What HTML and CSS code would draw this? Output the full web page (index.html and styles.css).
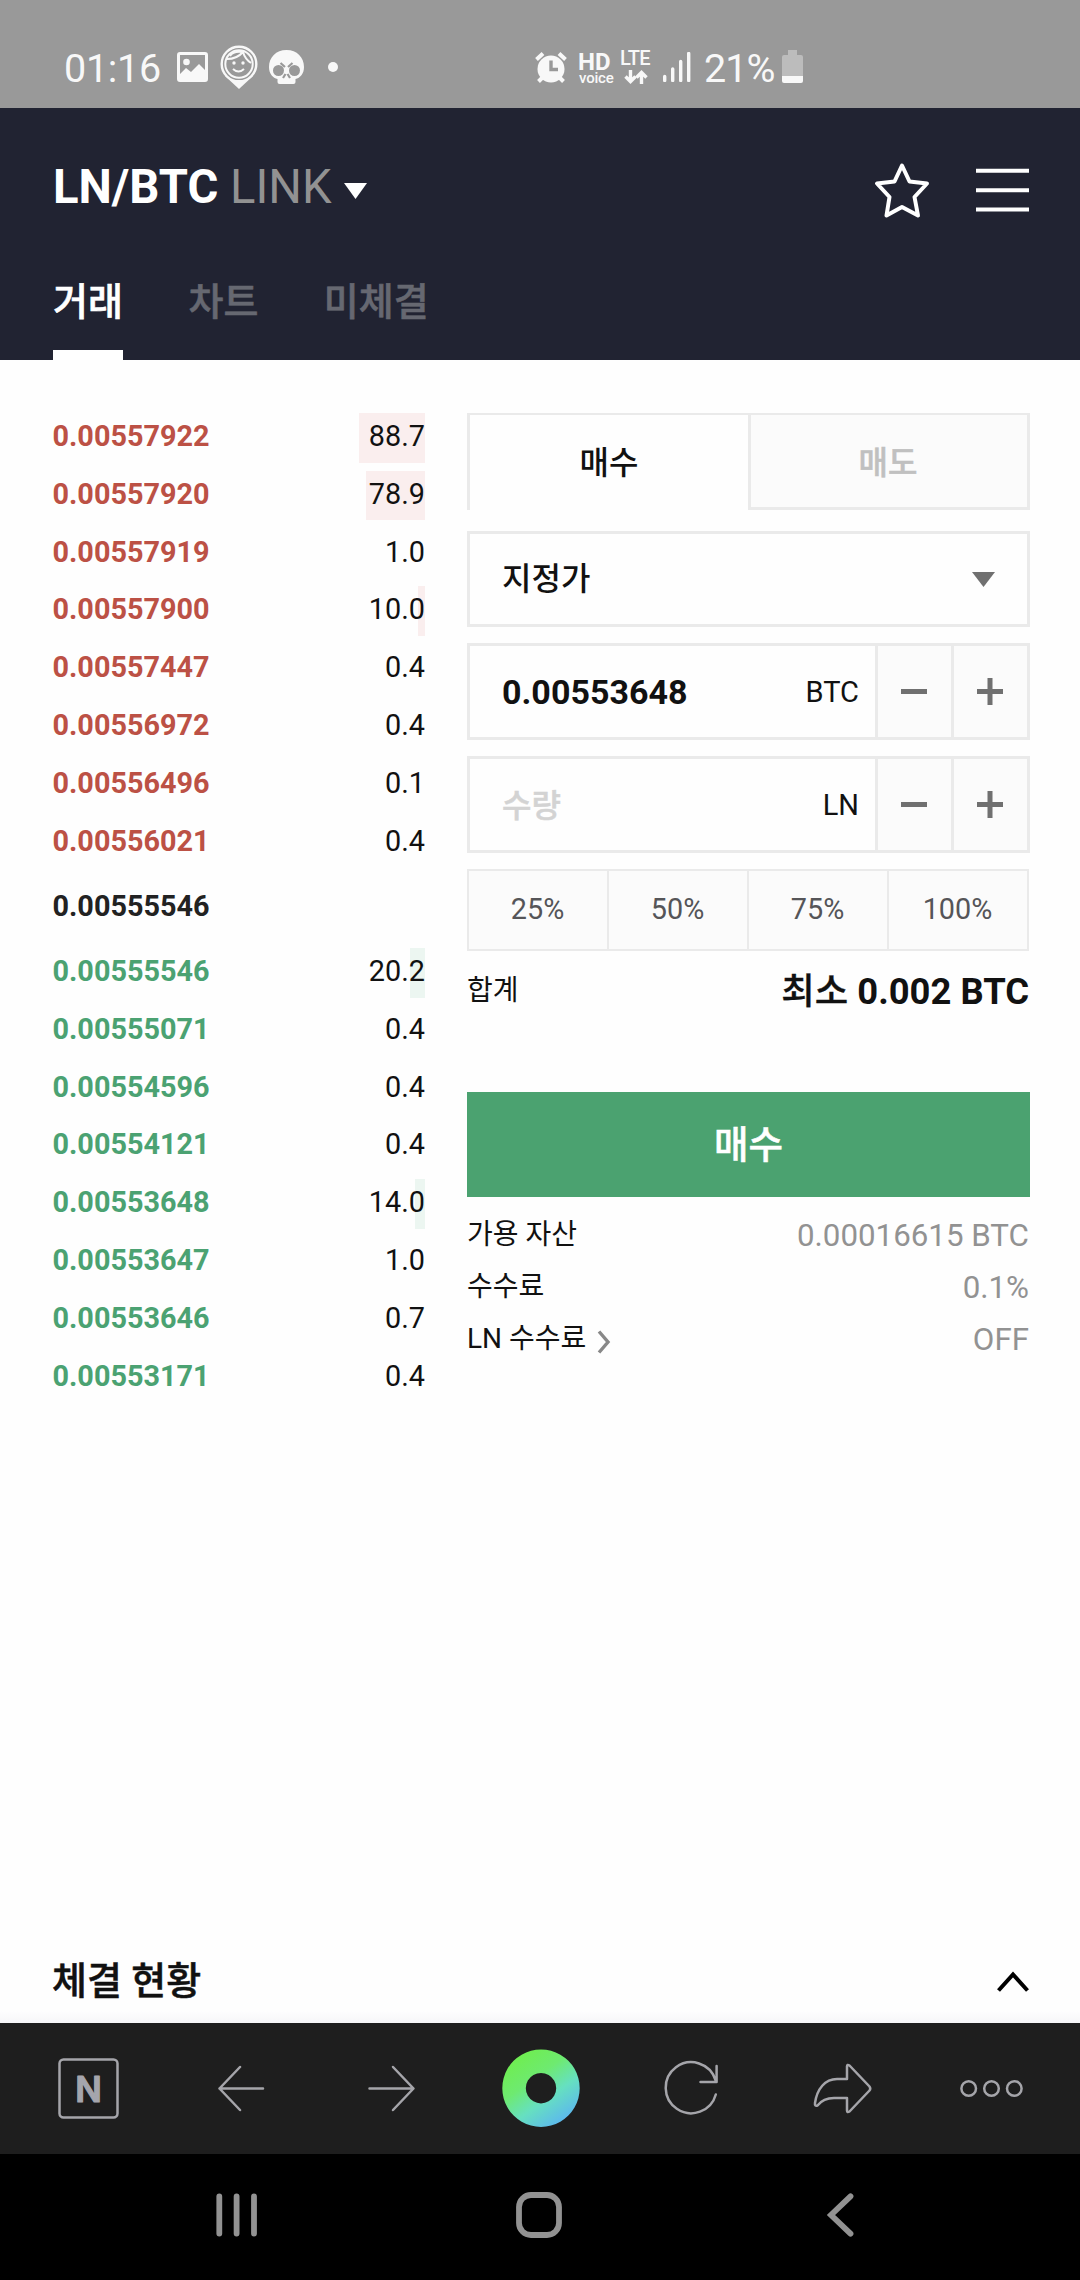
FILE: index.html
```html
<!DOCTYPE html>
<html lang="ko">
<head>
<meta charset="utf-8">
<title>LN/BTC</title>
<link rel="stylesheet" href="styles.css">
</head>
<body>
<div class="status">
  <div class="status-left">
    <span class="clock">01:16</span>
    <svg class="s-image" width="31" height="30" viewBox="0 0 31 30"><path fill="#f8f8f8" fill-rule="evenodd" d="M3 0H28Q31 0 31 3V27Q31 30 28 30H3Q0 30 0 27V3Q0 0 3 0ZM3 3V22L9 16L14 20L22 12L28 18V3Z"/><circle cx="9.5" cy="10" r="3.3" fill="#f8f8f8"/></svg>
    <svg class="s-pin" width="38" height="44" viewBox="0 0 38 44"><path fill="#f8f8f8" d="M5 31L19 44L33 31Z"/><circle cx="19" cy="19" r="17.3" fill="#999" stroke="#f8f8f8" stroke-width="2.4"/><circle cx="19" cy="19" r="13.7" fill="none" stroke="#f8f8f8" stroke-width="2"/><path d="M7 14Q17 14 23 7Q25 14 31 18M22 7Q13 6 10 11" fill="none" stroke="#f8f8f8" stroke-width="2"/><circle cx="14" cy="18" r="1.7" fill="#f8f8f8"/><circle cx="23" cy="18" r="1.7" fill="#f8f8f8"/><path d="M13 24Q18.500 29 24 24" fill="none" stroke="#f8f8f8" stroke-width="2"/></svg>
    <svg class="s-skull" width="35" height="34" viewBox="0 0 35 34"><path fill="#f8f8f8" d="M17.500 0C28 0 35 7.500 35 17C35 24 31 28 26.500 29V32Q26.500 34 24.500 34H10.500Q8.500 34 8.500 32V29C4 28 0 24 0 17C0 7.500 7 0 17.500 0Z"/><circle cx="9.500" cy="20.500" r="5.500" fill="#999"/><circle cx="25.500" cy="20.500" r="5.500" fill="#999"/><path d="M11.500 13L16 17M23.500 13L19 17M14 28L16.500 24M21 28L18.500 24" stroke="#999" stroke-width="2.200"/></svg>
    <svg class="s-dot" width="10" height="10" viewBox="0 0 10 10"><circle cx="5" cy="5" r="5" fill="#f8f8f8"/></svg>
  </div>
  <div class="status-right">
    <svg class="s-alarm" width="32" height="31" viewBox="0 0 32 31"><circle cx="16" cy="17" r="13.500" fill="#f8f8f8"/><path d="M1.500 7.500L8 1.500M30.500 7.500L24 1.500M3.500 29.500L7.500 25.500M28.500 29.500L24.500 25.500" stroke="#f8f8f8" stroke-width="4"/><path d="M16 8.500V17.500H23" fill="none" stroke="#999" stroke-width="3.400"/></svg>
    <div class="hd"><b>HD</b><span>voice</span></div>
    <div class="lte"><b>LTE</b><svg width="24" height="14" viewBox="0 0 24 14"><path d="M6.500 0V11M1.500 6.500L6.500 11.500L11.500 6.500M17.500 14V3M12.500 7.500L17.500 2.500L22.500 7.500" fill="none" stroke="#f8f8f8" stroke-width="3.400"/></svg></div>
    <svg class="s-signal" width="28" height="30" viewBox="0 0 28 30"><path d="M1.700 24.500V28.500M9.700 17V28.500M17.700 9.500V28.500M25.700 1.500V28.500" stroke="#f8f8f8" stroke-width="3.400" stroke-linecap="round"/></svg>
    <span class="battery-text">21%</span>
    <svg class="s-battery" width="21" height="33" viewBox="0 0 21 33"><path fill="#bcbcbc" d="M6 0H15V5H19Q21 5 21 7V26H0V7Q0 5 2 5H6Z"/><path fill="#f8f8f8" d="M0 26H21V31Q21 33 19 33H2Q0 33 0 31Z"/></svg>
  </div>
</div>

<header class="header">
  <div class="title-row">
    <h1 class="pair">LN/BTC <span>LINK</span></h1>
    <svg class="pair-caret" width="23" height="16" viewBox="0 0 23 16"><path fill="#fff" d="M0 0H23L11.500 16Z"/></svg>
    <svg class="star" width="56" height="58" viewBox="0 0 56 58"><path d="M28 4.500L35.500 20.500L53 22.500L40.500 36L44 54.500L28 46L12.500 54.500L15.500 36L3 22.500L20.500 20.500Z" fill="none" stroke="#fff" stroke-width="4" stroke-linejoin="round"/></svg>
    <svg class="menu" width="53" height="44" viewBox="0 0 53 44"><path d="M0 2.700H53M0 22.200H53M0 41.500H53" stroke="#fff" stroke-width="4"/></svg>
  </div>
  <nav class="tabs">
    <span class="tab tab-on">거래</span><span class="tab">차트</span><span class="tab">미체결</span>
  </nav>
</header>

<main class="main">
  <section class="book">
    <div class="row ask"><b>0.00557922</b><span>88.7</span><i style="width:66px"></i></div>
    <div class="row ask"><b>0.00557920</b><span>78.9</span><i style="width:59px"></i></div>
    <div class="row ask"><b>0.00557919</b><span>1.0</span></div>
    <div class="row ask"><b>0.00557900</b><span>10.0</span><i style="width:7px"></i></div>
    <div class="row ask"><b>0.00557447</b><span>0.4</span></div>
    <div class="row ask"><b>0.00556972</b><span>0.4</span></div>
    <div class="row ask"><b>0.00556496</b><span>0.1</span></div>
    <div class="row ask"><b>0.00556021</b><span>0.4</span></div>
    <div class="last"><b>0.00555546</b></div>
    <div class="row bid"><b>0.00555546</b><span>20.2</span><i style="width:15px"></i></div>
    <div class="row bid"><b>0.00555071</b><span>0.4</span></div>
    <div class="row bid"><b>0.00554596</b><span>0.4</span></div>
    <div class="row bid"><b>0.00554121</b><span>0.4</span></div>
    <div class="row bid"><b>0.00553648</b><span>14.0</span><i style="width:10px"></i></div>
    <div class="row bid"><b>0.00553647</b><span>1.0</span></div>
    <div class="row bid"><b>0.00553646</b><span>0.7</span></div>
    <div class="row bid"><b>0.00553171</b><span>0.4</span></div>
  </section>

  <section class="order">
    <div class="sides"><div class="side side-on">매수</div><div class="side side-off">매도</div></div>
    <div class="field type"><span class="type-name">지정가</span><svg width="23" height="15" viewBox="0 0 23 15"><path fill="#707070" d="M0 0H23L11.500 15Z"/></svg></div>
    <div class="field">
      <span class="value">0.00553648</span><span class="unit">BTC</span>
      <div class="step"><svg width="26" height="27" viewBox="0 0 26 27"><path d="M0 13.500H26" stroke="#707070" stroke-width="5"/></svg></div>
      <div class="step"><svg width="26" height="27" viewBox="0 0 26 27"><path d="M0 13.500H26M13 0V27" stroke="#707070" stroke-width="5"/></svg></div>
    </div>
    <div class="field">
      <span class="placeholder">수량</span><span class="unit">LN</span>
      <div class="step"><svg width="26" height="27" viewBox="0 0 26 27"><path d="M0 13.500H26" stroke="#707070" stroke-width="5"/></svg></div>
      <div class="step"><svg width="26" height="27" viewBox="0 0 26 27"><path d="M0 13.500H26M13 0V27" stroke="#707070" stroke-width="5"/></svg></div>
    </div>
    <div class="percents"><span>25%</span><span>50%</span><span>75%</span><span>100%</span></div>
    <div class="total"><span class="label">합계</span><b><span class="at-least">최소</span> 0.002 BTC</b></div>
    <div class="submit">매수</div>
    <div class="infos">
      <div class="info"><span class="label">가용 자산</span><span class="info-value">0.00016615 BTC</span></div>
      <div class="info"><span class="label">수수료</span><span class="info-value">0.1%</span></div>
      <div class="info"><span class="label">LN 수수료<svg class="more" width="14" height="24" viewBox="0 0 14 24"><path d="M2 1.500L11 12L2 22.500" fill="none" stroke="#888" stroke-width="3.400"/></svg></span><span class="info-value">OFF</span></div>
    </div>
  </section>
</main>

<div class="trades">
  <h2>체결 현황</h2>
  <svg width="34" height="22" viewBox="0 0 34 22"><path d="M2.500 19.500L17 3.500L31.500 19.500" fill="none" stroke="#000" stroke-width="4"/></svg>
</div>

<div class="toolbar">
  <svg viewBox="0 0 150 131"><rect x="44.500" y="36.500" width="58" height="58" rx="4" class="thin"/><text x="73.500" y="78.500" text-anchor="middle" class="n-mark">N</text></svg>
  <svg viewBox="0 0 150 131"><path class="thin" d="M98 65.500H54.500M75 44L54.500 65.500L75 87"/></svg>
  <svg viewBox="0 0 150 131"><path class="thin" d="M54.500 65.500H98M78 44L98.500 65.500L78 87"/></svg>
  <svg viewBox="0 0 150 131"><defs><linearGradient id="ring" x1="0.2" y1="0.08" x2="0.8" y2="0.92"><stop offset="0" stop-color="#6fee50"/><stop offset="0.35" stop-color="#6eea70"/><stop offset="0.65" stop-color="#66e0c0"/><stop offset="1" stop-color="#5cb8ee"/></linearGradient></defs><path fill="url(#ring)" fill-rule="evenodd" d="M76 26.500A38.700 38.700 0 1 1 75.990 26.500ZM76 50A15.200 15.200 0 1 0 76.010 50Z"/></svg>
  <svg viewBox="0 0 150 131"><path class="thin" d="M100.500 57A25.500 25.500 0 1 0 100.800 71.500M101.600 43V59H85.500"/></svg>
  <svg viewBox="0 0 150 131"><path class="thin" d="M82 56V43.500Q82 41 84.500 42.500L104.500 63.500Q106 65.500 104.500 67.500L84.500 88.500Q82 90 82 87.500V75H69C60 75 56 78 52.500 82.500Q49.500 83.500 50 80C52 66 60 56 72 56Z"/></svg>
  <svg viewBox="0 0 150 131"><g class="thin"><circle cx="53.700" cy="65.500" r="7.300"/><circle cx="76.500" cy="65.500" r="7.300"/><circle cx="99.300" cy="65.500" r="7.300"/></g></svg>
</div>

<div class="navbar">
  <svg class="nav-recent" width="42" height="44" viewBox="0 0 42 44"><path d="M3.300 3.500V40.500M20.600 3.500V40.500M38 3.500V40.500" class="nav-line"/></svg>
  <svg class="nav-home" width="46" height="46" viewBox="0 0 46 46"><rect x="3" y="3" width="40" height="40" rx="12" class="nav-line"/></svg>
  <svg class="nav-back" width="28" height="44" viewBox="0 0 28 44"><path d="M24.500 3.300L5 22L24.500 40.700" class="nav-line nav-miter"/></svg>
</div>
</body>
</html>
```
FILE: styles.css
```css
* { box-sizing: border-box; }
body {
  margin: 0;
  width: 1080px;
  height: 2280px;
  display: flex;
  flex-direction: column;
  background: #fefefe;
  color: #111;
  font-family: Roboto, "Noto Sans CJK KR", sans-serif;
  overflow: hidden;
}
svg { display: block; flex: none; }
h1, h2 { margin: 0; }

/* Status bar */
.status {
  height: 108px;
  flex: none;
  display: flex;
  background: #999;
  color: #f8f8f8;
}
.status-left, .status-right { display: flex; align-items: flex-start; }
.status-left { width: 535px; padding-left: 64px; }
.clock, .battery-text { font-size: 39.5px; line-height: 48px; margin-top: 45px; letter-spacing: -0.3px; }
.clock { width: 113px; }
.s-image { margin-top: 52px; }
.s-pin { margin: 45px 0 0 12px; }
.s-skull { margin: 50px 0 0 11px; }
.s-dot { margin: 62px 0 0 24px; }
.s-alarm { margin-top: 52px; }
.hd, .lte { display: flex; flex-direction: column; align-items: flex-start; }
.hd { width: 34px; margin: 52px 0 0 11px; }
.hd b { font-size: 24px; line-height: 20px; }
.hd span { font-size: 15px; line-height: 13px; font-weight: 500; margin-left: 1px; letter-spacing: -0.2px; }
.lte { width: 31px; margin: 47px 0 0 8px; }
.lte b { font-size: 20px; line-height: 23px; font-weight: 500; letter-spacing: -0.6px; }
.lte svg { margin-left: 4px; }
.s-signal { margin: 52px 0 0 12px; }
.battery-text { width: 78px; margin-left: 13px; letter-spacing: -1px; }
.s-battery { margin-top: 50px; }

/* Header */
.header {
  height: 252px;
  flex: none;
  padding: 0 51px 0 53px;
  background: #212332;
  color: #fff;
}
.title-row { height: 152px; display: flex; align-items: flex-start; }
.pair { font-size: 47.2px; line-height: 56px; margin-top: 51px; font-weight: 700; white-space: nowrap; }
.pair span { font-weight: 400; color: #929292; }
.pair-caret { margin: 75px auto 0 12px; }
.star { margin-top: 53px; }
.menu { margin: 60px 0 0 46px; }
.tabs { height: 100px; display: flex; gap: 65.5px; }
.tab {
  height: 100px;
  font-size: 38px;
  line-height: 85px;
  font-weight: 500;
  -webkit-text-stroke: 0.6px currentColor;
  color: #666871;
}
.tab-on { color: #fff; border-bottom: 10px solid #fff; }

/* Trading area */
.main {
  height: 1583px;
  flex: none;
  display: flex;
  padding: 53px 50px 0 52.5px;
}
.book { width: 372.5px; margin-right: 42px; font-size: 28.8px; }
.row {
  position: relative;
  display: flex;
  justify-content: space-between;
  height: 49.5px;
  line-height: 47.5px;
  margin-bottom: 8.3px;
}
.row span { position: relative; z-index: 1; }
.row i { position: absolute; right: 0; top: 0; bottom: 0; }
.ask b { color: #bc5145; }
.ask i { background: #faeeee; }
.bid b { color: #4ba272; }
.bid i { background: #ecf6f1; }
.last { height: 81px; margin-top: -8.3px; line-height: 79px; color: #222; }

/* Order form */
.order { width: 563px; }
.sides { display: grid; grid-template-columns: 281px 282px; height: 97px; }
.side {
  height: 97px;
  font-size: 32px;
  font-weight: 500;
  line-height: 96px;
  text-align: center;
  border: solid #eaeaea;
}
.side-on { border-width: 2px 0 0 3px; }
.side-off { border-width: 2px 3px 3px; padding-right: 2px; background: #fbfbfb; color: #c0c0c0; }
.side-off, .placeholder, .submit { -webkit-text-stroke: 0.5px currentColor; }
.field {
  height: 97px;
  margin-top: 16px;
  border: 3px solid #eaeaea;
  display: flex;
  align-items: stretch;
  line-height: 92px;
  padding-left: 32px;
}
.type { height: 96px; margin-top: 21px; align-items: center; padding-right: 32px; }
.type svg { margin-left: auto; }
.type-name, .placeholder { font-size: 32px; font-weight: 500; }
.placeholder { color: #d3d3d3; line-height: 94px; }
.value { font-size: 34px; font-weight: 700; line-height: 93px; }
.unit { font-size: 29px; margin-left: auto; padding-right: 16px; }
.step {
  width: 76px;
  border-left: 3px solid #eaeaea;
  padding-right: 1px;
  background: #fbfbfb;
  display: flex;
  align-items: center;
  justify-content: center;
}
.percents {
  display: grid;
  grid-template-columns: repeat(4, 1fr);
  height: 82px;
  margin: 16px 1px 0 0;
  border: solid #eaeaea;
  border-width: 2px 2px 2px 0;
  background: #fbfbfb;
  font-size: 28.8px;
  line-height: 77px;
  text-align: center;
  color: #555558;
}
.percents span { border-left: 2px solid #eaeaea; padding-right: 1px; }
.label { font-size: 28px; display: flex; align-items: center; line-height: 52px; }
.total { height: 141px; display: flex; justify-content: space-between; line-height: 82px; padding-right: 1px; }
.total .label { height: 80px; }
.total b { font-size: 36.4px; }
.at-least { font-weight: 500; -webkit-text-stroke: 0.3px currentColor; }
.submit {
  height: 105px;
  background: #4ba270;
  color: #fff;
  font-size: 37.5px;
  font-weight: 500;
  line-height: 107px;
  text-align: center;
}
.infos { padding-top: 13px; }
.info { display: flex; justify-content: space-between; height: 52px; line-height: 52px; padding-right: 1px; }
.info .label { height: 50px; }
.info-value { font-size: 31.3px; color: #929292; }
.more { margin: 5px 0 0 11px; }

/* Trades sheet handle */
.trades {
  height: 80px;
  flex: none;
  display: flex;
  justify-content: space-between;
  padding: 0 50px 0 52px;
  background: linear-gradient(#fefefe 68px, #f6f6f8 80px);
}
.trades h2 { font-size: 38px; line-height: 76px; font-weight: 500; -webkit-text-stroke: 0.5px currentColor; }
.trades svg { margin-top: 28px; }

/* Browser toolbar */
.toolbar {
  height: 131px;
  flex: none;
  display: grid;
  grid-template-columns: repeat(7, 150px);
  padding-left: 15px;
  background: #1e1e1e;
}
.toolbar svg { width: 150px; height: 131px; }
.thin { fill: none; stroke: #a5a5aa; stroke-width: 2.5; stroke-linecap: round; stroke-linejoin: round; }
.n-mark { font: 600 35px Inter, sans-serif; fill: #a5a5ad; stroke: #a5a5ad; stroke-width: 1.2; stroke-linejoin: round; }

/* System navigation */
.navbar { height: 126px; flex: none; display: flex; background: #000; }
.nav-line { fill: none; stroke: #929292; stroke-width: 5.8; stroke-linecap: round; stroke-linejoin: round; }
.nav-miter { stroke-linejoin: miter; }
.nav-recent { margin: 38.500px 0 0 215.500px; }
.nav-home { margin: 37.500px 0 0 258px; }
.nav-back { margin: 38.500px 0 0 264.500px; }
```
